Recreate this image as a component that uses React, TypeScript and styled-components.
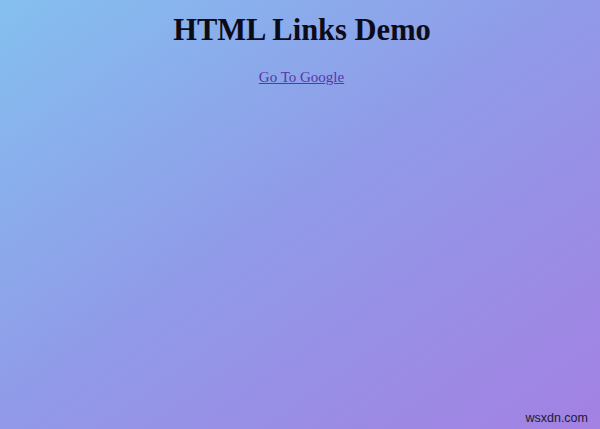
import React from "react";
import styled, { createGlobalStyle } from "styled-components";

const Global = createGlobalStyle`
  html, body { margin: 0; padding: 0; }
  body { font-family: "Liberation Serif", "Times New Roman", serif; }
`;

const Page = styled.div`
  position: relative;
  width: 600px;
  height: 429px;
  overflow: hidden;
  background: linear-gradient(to bottom right, #84c0ef 0%, #9199e8 50%, #a381e3 100%);
  display: flex;
  flex-direction: column;
  align-items: center;
  box-sizing: border-box;
  padding-top: 13px;
`;

const Title = styled.h1`
  margin: 0;
  font-size: 30.5px;
  line-height: 35px;
  font-weight: bold;
  color: #0c0c18;
  padding-left: 4px;
`;

const LinkText = styled.a`
  margin-top: 21px;
  font-size: 15px;
  line-height: 17px;
  color: #5a35a8;
  text-decoration: underline;
  padding-left: 3px;
`;

const Watermark = styled.div`
  position: absolute;
  right: 12px;
  bottom: 4px;
  font-family: "Liberation Sans", Arial, sans-serif;
  font-size: 12.5px;
  color: #1e1a30;
`;

export default function App() {
  return (
    <>
      <Global />
      <Page>
        <Title>HTML Links Demo</Title>
        <LinkText href="#">Go To Google</LinkText>
        <Watermark>wsxdn.com</Watermark>
      </Page>
    </>
  );
}
